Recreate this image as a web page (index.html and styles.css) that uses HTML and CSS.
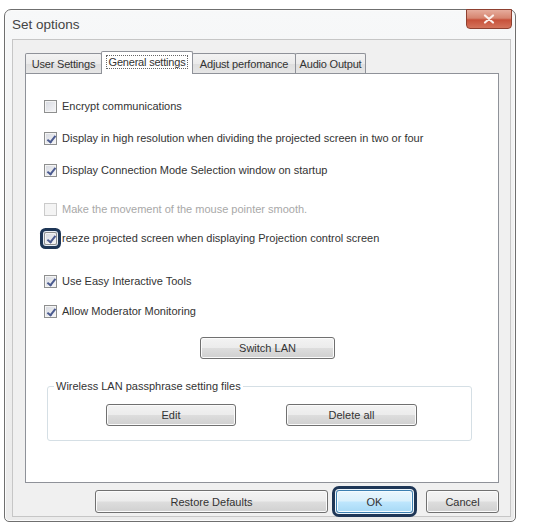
FILE: index.html
```html
<!DOCTYPE html>
<html>
<head>
<meta charset="utf-8">
<link rel="stylesheet" href="styles.css">
</head>
<body>
<div class="window">
  <div class="titlebar">
    <span class="title">Set options</span>
    <button class="close" aria-label="Close">
      <svg width="12" height="10" viewBox="0 0 12 10"><path d="M2 1.5 L10 8.5 M10 1.5 L2 8.5" stroke="#fbeeea" stroke-width="2.2" stroke-linecap="round"/></svg>
    </button>
  </div>
  <div class="client">
    <div class="tabs">
      <div class="tab tab-user">User Settings</div>
      <div class="tab tab-general selected"><span class="focus">General settings</span></div>
      <div class="tab tab-adjust">Adjust perfomance</div>
      <div class="tab tab-audio">Audio Output</div>
    </div>
    <div class="panel">
      <label class="opt r1"><span class="cb"></span>Encrypt communications</label>
      <label class="opt r2"><span class="cb checked"></span>Display in high resolution when dividing the projected screen in two or four</label>
      <label class="opt r3"><span class="cb checked"></span>Display Connection Mode Selection window on startup</label>
      <label class="opt r4 disabled"><span class="cb"></span>Make the movement of the mouse pointer smooth.</label>
      <label class="opt r5"><span class="cb checked focused"></span>reeze projected screen when displaying Projection control screen</label>
      <label class="opt r6"><span class="cb checked"></span>Use Easy Interactive Tools</label>
      <label class="opt r7"><span class="cb checked"></span>Allow Moderator Monitoring</label>
      <button class="btn btn-switch">Switch LAN</button>
      <fieldset class="group">
        <legend>Wireless LAN passphrase setting files</legend>
        <div class="group-row">
          <button class="btn btn-edit">Edit</button>
          <button class="btn btn-delete">Delete all</button>
        </div>
      </fieldset>
    </div>
    <div class="footer">
      <button class="btn btn-restore">Restore Defaults</button>
      <button class="btn btn-ok">OK</button>
      <button class="btn btn-cancel">Cancel</button>
    </div>
  </div>
</div>
</body>
</html>
```
FILE: styles.css
```css
* { box-sizing: border-box; }
body {
  margin: 0;
  background: #ffffff;
  font-family: "Liberation Sans", Arial, sans-serif;
  font-size: 11px;
  color: #333333;
}
.window {
  margin: 9px 0 0 4px;
  width: 512px;
  height: 513px;
  border: 1px solid #6f6f6f;
  border-radius: 7px 7px 5px 5px;
  background: linear-gradient(#f7f8f9, #eeeeee 60%, #ebebeb);
  display: flex;
  flex-direction: column;
  box-shadow: inset 0 0 0 1px #fbfbfb;
}
.titlebar {
  height: 29px;
  display: flex;
  justify-content: space-between;
  align-items: flex-start;
  padding-left: 7px;
}
.title {
  font-size: 13.5px;
  color: #444444;
  margin-top: 7px;
}
.close {
  width: 46px;
  height: 20px;
  margin: -1px 3px 0 0;
  padding: 0;
  border: 1px solid #8e4030;
  border-radius: 0 0 4px 4px;
  background: linear-gradient(#e6ac9c 0%, #d68570 45%, #c7513a 55%, #d4745c 100%);
  display: flex;
  align-items: center;
  justify-content: center;
}
.close svg { display: block; }
.client {
  margin: 0 4px 4px 7px;
  height: 478px;
  border: 1px solid #c6c6c6;
  background: #f0f0f0;
  padding: 11px 11px 0 12px;
}
.tabs {
  display: flex;
  align-items: flex-end;
  height: 22px;
  position: relative;
  z-index: 1;
}
.tab {
  height: 20px;
  border: 1px solid #8f9299;
  border-bottom: none;
  margin-right: -1px;
  background: linear-gradient(#f3f3f3, #ebebeb 50%, #dedede 50%, #e6e6e6);
  display: flex;
  align-items: center;
  justify-content: center;
  border-radius: 2px 2px 0 0;
  letter-spacing: -0.2px;
}
.tab-user { width: 77px; }
.tab-general { width: 92px; }
.tab-adjust { width: 104px; }
.tab-audio { width: 71px; }
.tab.selected {
  height: 23px;
  margin-bottom: -1px;
  background: #ffffff;
  position: relative;
  z-index: 2;
  align-items: flex-start;
  padding-top: 3px;
}
.focus {
  border: 1px dotted #666;
  padding: 0 2px;
  line-height: 12px;
}
.panel {
  height: 410px;
  border: 1px solid #8f9299;
  background: #ffffff;
  padding: 23px 0 0 18px;
  display: flex;
  flex-direction: column;
  align-items: flex-start;
}
.opt {
  display: flex;
  align-items: center;
  height: 18px;
  gap: 5px;
  white-space: nowrap;
}
.r2, .r3 { margin-top: 14px; }
.r4 { margin-top: 21px; }
.r5 { margin-top: 11px; }
.r6 { margin-top: 25px; }
.r7 { margin-top: 12px; }
.opt.disabled { color: #a8a8a8; }
.cb {
  width: 13px;
  height: 13px;
  flex: none;
  border: 1px solid #8e8f8f;
  background: linear-gradient(135deg, #d6d9e0, #f6f6f8);
  box-shadow: inset 0 0 0 1px #f4f4f4;
  position: relative;
}
.disabled .cb {
  border-color: #cbcbcb;
  background: #f4f4f4;
  box-shadow: none;
}
.cb.checked::after {
  content: "";
  position: absolute;
  left: 4px;
  top: 1px;
  width: 3px;
  height: 7px;
  border: solid #4b5b90;
  border-width: 0 2px 2px 0;
  transform: rotate(38deg);
}
.cb.focused {
  border-radius: 2px;
  box-shadow: inset 0 0 0 1px #f4f4f4, 0 0 0 1px #e8eef6, 0 0 0 4px #1e3656;
}
.btn {
  font-family: "Liberation Sans", Arial, sans-serif;
  font-size: 11px;
  color: #333333;
  border: 1px solid #707070;
  border-radius: 3px;
  background: linear-gradient(#f3f3f3 0%, #ececec 48%, #dddddd 52%, #d0d0d0 100%);
  box-shadow: inset 0 0 0 1px #fbfbfb;
  padding: 0;
  height: 22px;
}
.btn-switch {
  width: 135px;
  margin: 17px 0 0 156px;
}
.group {
  margin: 21px 0 0 3px;
  width: 425px;
  border: 1px solid #d5dfe5;
  border-radius: 3px;
  padding: 0 0 14px 0;
  box-shadow: inset 0 0 0 1px #ffffff;
}
.group legend {
  margin-left: 6px;
  padding: 0 2px;
}
.group-row {
  display: flex;
  gap: 50px;
  margin: 12px 0 0 58px;
}
.btn-edit { width: 130px; }
.btn-delete { width: 131px; }
.footer {
  display: flex;
  justify-content: flex-end;
  margin-top: 7px;
}
.footer .btn { height: 23px; }
.btn-restore { width: 233px; margin-right: 8px; }
.btn-ok {
  width: 77px;
  margin-right: 13px;
  border-color: #3c7fb1;
  background: linear-gradient(#eaf6fd 0%, #d9f0fc 48%, #bee6fd 52%, #a7d9f5 100%);
  box-shadow: inset 0 0 0 1px #f4fbff, 0 0 0 1px #eef6fb, 0 0 0 4px #1e3656;
}
.btn-cancel { width: 73px; }
```
